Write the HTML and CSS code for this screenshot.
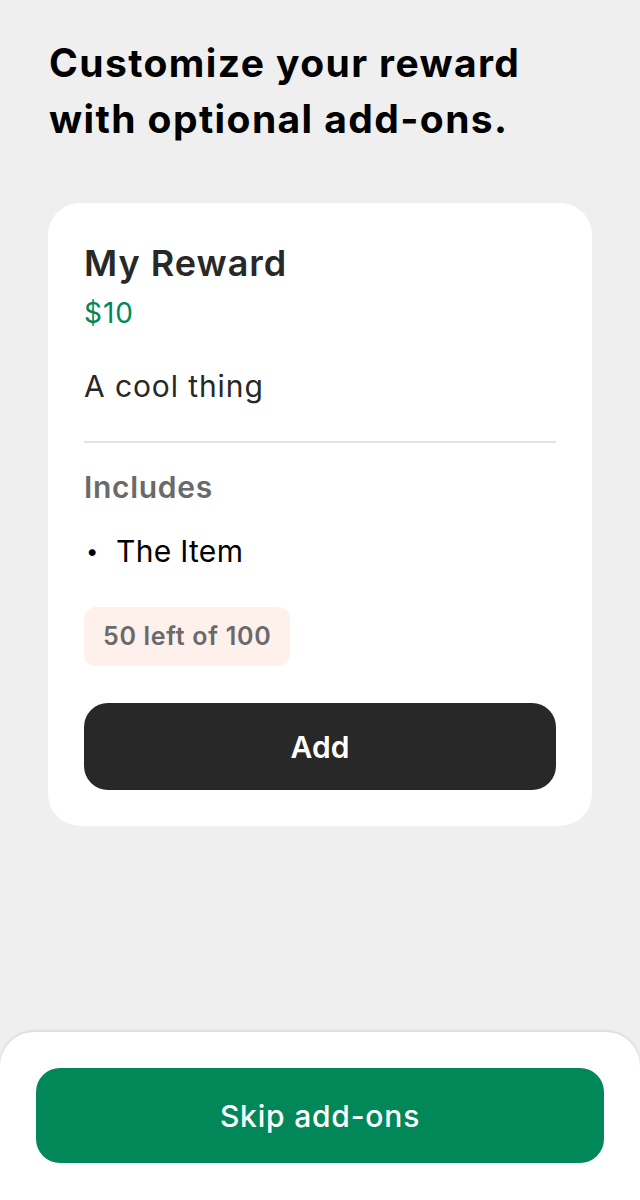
FILE: index.html
```html
<!DOCTYPE html>
<html lang="en">
<head>
<meta charset="utf-8">
<title>Add-ons</title>
<link rel="stylesheet" href="styles.css">
</head>
<body>
<main class="content">
  <h1 class="title">Customize your reward with optional add-ons.</h1>
  <section class="card">
    <h2 class="reward-name">My Reward</h2>
    <div class="reward-price">$10</div>
    <p class="reward-desc">A cool thing</p>
    <hr class="divider">
    <h3 class="includes">Includes</h3>
    <ul class="items">
      <li class="item"><span class="bullet">•</span><span>The Item</span></li>
    </ul>
    <div class="badge">50 left of 100</div>
    <button class="btn btn-dark">Add</button>
  </section>
</main>
<footer class="bottom-bar">
  <button class="btn btn-green">Skip add-ons</button>
</footer>
</body>
</html>
```
FILE: styles.css
```css
* { box-sizing: border-box; }
html, body { margin: 0; padding: 0; }
body {
  background: #efefef;
  font-family: Inter, "Noto Sans", "Liberation Sans", sans-serif;
  color: #282828;
  min-height: 1200px;
  display: flex;
  flex-direction: column;
}
.content {
  padding: 35px 48px 0 48px;
}
.title {
  margin: 0;
  font-size: 39px;
  line-height: 56px;
  font-weight: 700;
  letter-spacing: 1.4px;
  color: #000;
  padding-left: 1px;
  max-width: 540px;
}
.card {
  margin-top: 56px;
  background: #fff;
  border-radius: 32px;
  padding: 38px 36px 36px 36px;
  display: flex;
  flex-direction: column;
}
.reward-name {
  margin: 0;
  font-size: 36px;
  line-height: 44px;
  font-weight: 600;
  letter-spacing: 1px;
  color: #282828;
}
.reward-price {
  margin-top: 12px;
  font-size: 28px;
  line-height: 32px;
  letter-spacing: 1px;
  color: #028858;
}
.reward-desc {
  margin: 39px 0 0 0;
  font-size: 30px;
  line-height: 36px;
  letter-spacing: 0.9px;
  color: #282828;
}
.divider {
  margin: 37px 0 0 0;
  border: 0;
  height: 2px;
  background: #e4e4e4;
}
.includes {
  margin: 26px 0 0 0;
  font-size: 30px;
  line-height: 36px;
  font-weight: 600;
  letter-spacing: 0.7px;
  color: #6a6a6a;
}
.items {
  list-style: none;
  margin: 28px 0 0 0;
  padding: 0;
}
.item {
  display: flex;
  font-size: 30px;
  line-height: 36px;
  letter-spacing: 0.3px;
  color: #000;
}
.bullet {
  width: 32px;
  padding-left: 2px;
  font-size: 22px;
}
.badge {
  align-self: flex-start;
  margin-top: 38px;
  background: #fef0eb;
  border-radius: 12px;
  padding: 14px 19px 15px 19px;
  font-size: 25px;
  line-height: 30px;
  font-weight: 600;
  letter-spacing: 0.7px;
  color: #6a6a6a;
}
.btn {
  border: 0;
  display: flex;
  align-items: center;
  justify-content: center;
  font-family: inherit;
  font-size: 30px;
  line-height: 36px;
  font-weight: 600;
  color: #fff;
  width: 100%;
}
.btn-dark {
  margin-top: 37px;
  height: 87px;
  background: #282828;
  border-radius: 24px;
}
.bottom-bar {
  margin-top: auto;
  background: #fff;
  border-radius: 34px 34px 0 0;
  box-shadow: 0 -1px 3px rgba(0, 0, 0, 0.12);
  padding: 36px 36px 37px 36px;
}
.btn-green {
  height: 95px;
  background: #028858;
  border-radius: 24px;
  font-weight: 500;
  letter-spacing: 0.8px;
}
```
